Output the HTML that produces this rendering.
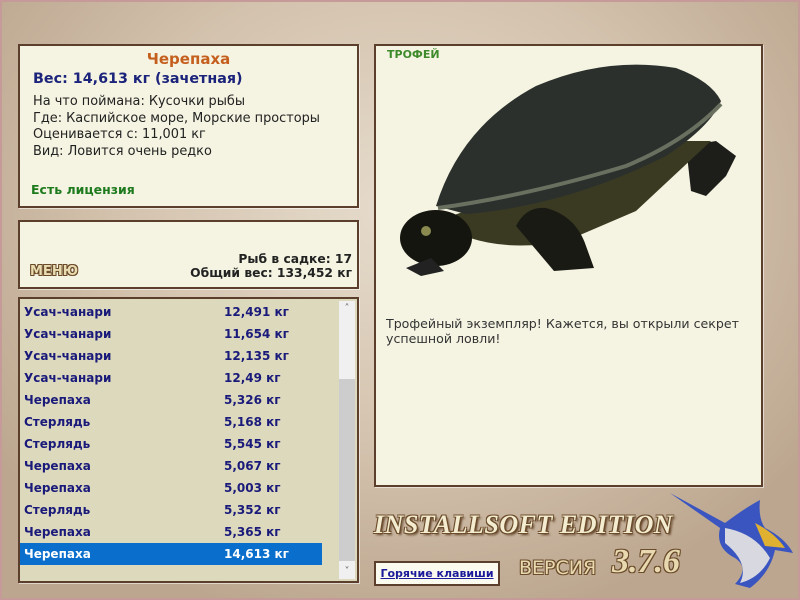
<!DOCTYPE html>
<html><head><meta charset="utf-8">
<style>
*{margin:0;padding:0;box-sizing:border-box}
body{width:800px;height:600px;overflow:hidden;font-family:"DejaVu Sans","Liberation Sans",sans-serif;font-size:12px;position:relative;
background:radial-gradient(ellipse 500px 420px at 400px 210px,#e6dccd 0%,#d4c3ae 55%,#bca68f 100%);box-shadow:inset 0 0 0 2px #c79a9a}
.p{position:absolute;background:#f5f4e2;border:2px solid #5b3f2c;box-shadow:1px 1px 0 #fff8}
.b{font-weight:bold}
#list div{height:22px;line-height:22px;font-weight:bold;color:#1a1a7a;font-size:12px;position:relative;padding-left:4px}
#list span{position:absolute;left:204px}
</style></head><body>
<div class="p" style="left:18px;top:44px;width:341px;height:164px">
 <div class="b" style="position:absolute;top:4px;width:100%;text-align:center;color:#c55f1e;font-size:15px">Черепаха</div>
 <div class="b" style="position:absolute;left:13px;top:25px;color:#1b237a;font-size:14.3px">Вес: 14,613 кг (зачетная)</div>
 <div style="position:absolute;left:13px;top:48px;line-height:16.5px;color:#222;font-size:12.9px">На что поймана: Кусочки рыбы<br>Где: Каспийское море, Морские просторы<br>Оценивается с: 11,001 кг<br>Вид: Ловится очень редко</div>
 <div class="b" style="position:absolute;left:11px;top:136px;color:#1d7a1d;font-size:12.5px">Есть лицензия</div>
</div>
<div class="p" style="left:18px;top:220px;width:341px;height:69px">
 <div class="b" style="position:absolute;right:5px;top:30px;text-align:right;line-height:14px;color:#222;font-size:12.3px">Рыб в садке: 17<br>Общий вес: 133,452 кг</div>
 <div class="b" style="position:absolute;left:10px;top:42px;font-size:13px;color:#e8dcb0;text-shadow:-1px -1px 0 #6b4a2a,1px 1px 0 #6b4a2a,1px -1px 0 #6b4a2a,-1px 1px 0 #6b4a2a">МЕНЮ</div>
</div>
<div class="p" style="left:18px;top:297px;width:341px;height:286px;background:#dcd9bd">
 <div id="list" style="position:absolute;left:0px;top:2px;width:302px">
  <div>Усач-чанари<span>12,491 кг</span></div>
  <div>Усач-чанари<span>11,654 кг</span></div>
  <div>Усач-чанари<span>12,135 кг</span></div>
  <div>Усач-чанари<span>12,49 кг</span></div>
  <div>Черепаха<span>5,326 кг</span></div>
  <div>Стерлядь<span>5,168 кг</span></div>
  <div>Стерлядь<span>5,545 кг</span></div>
  <div>Черепаха<span>5,067 кг</span></div>
  <div>Черепаха<span>5,003 кг</span></div>
  <div>Стерлядь<span>5,352 кг</span></div>
  <div>Черепаха<span>5,365 кг</span></div>
  <div style="background:#0a6fcc;color:#fff">Черепаха<span>14,613 кг</span></div>
 </div>
 <div style="position:absolute;right:2px;top:2px;width:16px;height:278px;background:#f0f0f0">
  <div style="position:absolute;top:78px;left:0;width:16px;height:182px;background:#cdcdcd"></div>
  <div style="position:absolute;top:2px;width:16px;text-align:center;font-size:10px;color:#666">˄</div>
  <div style="position:absolute;bottom:2px;width:16px;text-align:center;font-size:10px;color:#666">˅</div>
 </div>
</div>
<div class="p" style="left:374px;top:44px;width:389px;height:443px">
 <div class="b" style="position:absolute;left:11px;top:2px;color:#3d8a2a;font-size:11px">ТРОФЕЙ</div>
 <svg style="position:absolute;left:0;top:0" width="385" height="260">
  <path d="M310 100 L340 95 L360 110 L350 130 L330 150 L315 145 Z" fill="#1d1d1a"/>
  <path d="M60 175 Q110 210 190 195 L260 165 L335 95 L300 95 Z" fill="#3a3a22"/>
  <path d="M60 160 Q85 80 160 40 Q230 10 300 22 Q335 35 345 55 Q335 80 290 110 Q190 160 90 168 Z" fill="#2b302c"/>
  <path d="M62 162 Q150 150 250 120 Q310 95 345 58" stroke="#6a7060" stroke-width="4" fill="none"/>
  <path d="M140 180 Q150 160 170 162 Q200 170 210 200 L218 222 L178 225 Z" fill="#1a1a14"/>
  <ellipse cx="60" cy="192" rx="36" ry="28" fill="#151510"/>
  <path d="M30 222 L55 212 L68 225 L45 230Z" fill="#222"/>
  <circle cx="50" cy="185" r="5" fill="#8a8a50"/>
 </svg>
 <div style="position:absolute;left:10px;top:270px;line-height:15px;color:#333;font-size:12.6px">Трофейный экземпляр! Кажется, вы открыли секрет<br>успешной ловли!</div>
</div>
<div style="position:absolute;left:374px;top:510px;font-family:'Liberation Serif',serif;font-style:italic;font-weight:bold;font-size:26px;color:#f4ecd0;letter-spacing:0.5px;text-shadow:-1px -1px 0 #6b4c2a,1px 1px 0 #6b4c2a,1px -1px 0 #6b4c2a,-1px 1px 0 #6b4c2a,2px 2px 2px #5a3a20">INSTALLSOFT EDITION</div>
<div style="position:absolute;left:519px;top:557px;font-size:19px;color:#e8d9b0;text-shadow:-1px -1px 0 #6b4c2a,1px 1px 0 #6b4c2a,1px -1px 0 #6b4c2a,-1px 1px 0 #6b4c2a">ВЕРСИЯ</div>
<div style="position:absolute;left:612px;top:543px;font-family:'Liberation Serif',serif;font-style:italic;font-weight:bold;font-size:34px;color:#e8d9b0;text-shadow:-1px -1px 0 #6b4c2a,1px 1px 0 #6b4c2a,1px -1px 0 #6b4c2a,-1px 1px 0 #6b4c2a">3.7.6</div>
<div style="position:absolute;left:374px;top:561px;width:126px;height:25px;background:#fbfaee;border:2px solid #5b3f2c;text-align:center;line-height:21px;font-weight:bold;font-size:11px;color:#1a1a9a;text-decoration:underline">Горячие клавиши</div>
<svg style="position:absolute;left:665px;top:488px" width="135" height="110">
 <path d="M5 5 L60 35 Q80 20 95 12 Q93 30 100 40 Q120 50 128 65 L110 62 Q105 85 85 100 L70 96 Q85 80 70 70 Q50 60 55 40 Z" fill="#3a55c0"/>
 <path d="M60 40 Q90 45 105 70 Q95 90 75 95 Q85 75 60 55 Z" fill="#d8d8e0"/>
 <path d="M90 35 Q110 45 120 60 L100 58 Z" fill="#e0b030"/>
</svg>
</body></html>
